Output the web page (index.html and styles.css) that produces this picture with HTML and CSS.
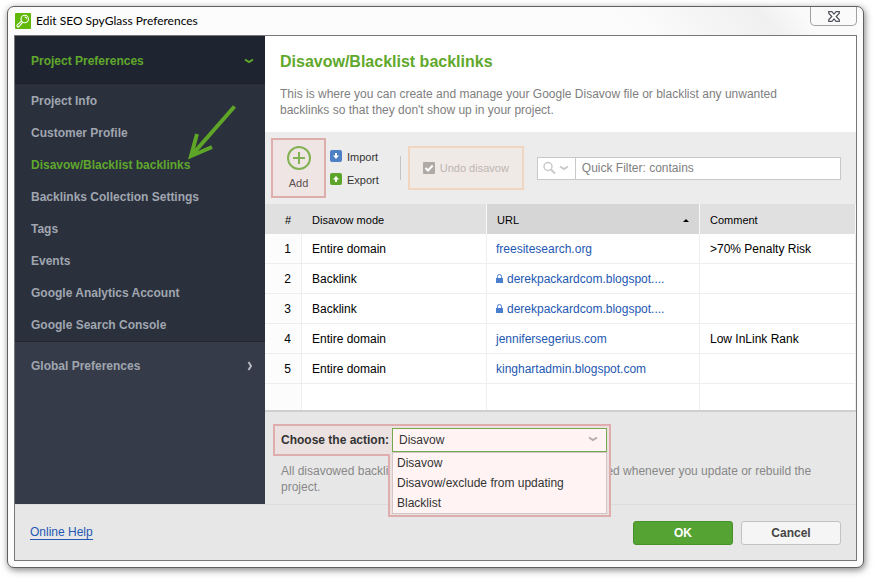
FILE: index.html
```html
<!DOCTYPE html>
<html lang="en">
<head>
    <meta charset="UTF-8">
    <meta name="viewport" content="width=device-width, initial-scale=1.0">
    <title>Edit SEO SpyGlass Preferences</title>
    <link rel="stylesheet" href="styles.css">
</head>
<body>
    <div class="window">
        <header class="titlebar">
            <svg class="app-icon" width="16" height="16" viewBox="0 0 16 16">
                <rect width="16" height="16" rx="1" fill="#62b808"/>
                <g fill="none" stroke="#fff" stroke-width="1.1">
                    <circle cx="9.7" cy="6" r="3.7"/>
                    <path d="M6.4 8.2 2.3 11.9a1.1 1.1 0 0 0 1.6 1.6L7.6 9.3M9.6 4a2 2 0 0 1 2 1.8"/>
                </g>
            </svg>
            <span class="window-title">Edit SEO SpyGlass Preferences</span>
            <button class="close" aria-label="Close">
                <svg width="12" height="11" viewBox="0 0 12 11">
                    <path d="M.7.7h3.2L6 3.1 8.1.7h3.2v1.5L8.2 5.5l3.1 3.3v1.5H8.1L6 7.9 3.9 10.3H.7V8.8l3.1-3.3L.7 2.2z" fill="#fff" stroke="#50535c" stroke-width="1.2"/>
                </svg>
            </button>
        </header>

        <div class="client">
            <div class="content">
                <nav class="sidebar">
                    <a class="section open" href="#">Project Preferences
                        <svg width="10" height="6" viewBox="0 0 10 6"><path d="M1 1.5 5 4l4-2.5" fill="none" stroke="#5fa82c" stroke-width="2"/></svg>
                    </a>
                    <ul class="nav-list">
                        <li><a href="#">Project Info</a></li>
                        <li><a href="#">Customer Profile</a></li>
                        <li><a class="active" href="#">Disavow/Blacklist backlinks</a></li>
                        <li><a href="#">Backlinks Collection Settings</a></li>
                        <li><a href="#">Tags</a></li>
                        <li><a href="#">Events</a></li>
                        <li><a href="#">Google Analytics Account</a></li>
                        <li><a href="#">Google Search Console</a></li>
                    </ul>
                    <a class="section" href="#">Global Preferences
                        <svg class="right" width="6" height="10" viewBox="0 0 6 10"><path d="M1.5 1 4 5 1.5 9" fill="none" stroke="#b4b8be" stroke-width="2"/></svg>
                    </a>
                    <svg class="arrow" width="50" height="58" viewBox="0 0 50 58">
                        <path d="M47.5 2.5 4 52" fill="none" stroke="#5fa527" stroke-width="4"/>
                        <path d="M10 30 4 52l21-9" fill="none" stroke="#5fa527" stroke-width="4"/>
                    </svg>
                </nav>

                <main class="main">
                    <div class="intro">
                        <h1>Disavow/Blacklist backlinks</h1>
                        <p>This is where you can create and manage your Google Disavow file or blacklist any unwanted backlinks so that they don't show up in your project.</p>
                    </div>

                    <div class="toolbar">
                        <button class="add">
                            <svg width="24" height="24" viewBox="0 0 24 24" fill="none" stroke="#82b254" stroke-width="2">
                                <circle cx="12" cy="12" r="11"/><path d="M12 6v12M6 12h12"/>
                            </svg>
                            Add
                        </button>
                        <div class="transfer">
                            <button>
                                <svg width="12" height="12" viewBox="0 0 12 12"><rect width="12" height="12" rx="2" fill="#4f7fc4"/><path d="M5 3h2v2.5h2L6 9 3 5.5h2z" fill="#fff"/></svg>
                                Import
                            </button>
                            <button>
                                <svg width="12" height="12" viewBox="0 0 12 12"><rect width="12" height="12" rx="2" fill="#5ba52a"/><path d="M5 9h2V6.5h2L6 3 3 6.5h2z" fill="#fff"/></svg>
                                Export
                            </button>
                        </div>
                        <span class="divider"></span>
                        <button class="undo" disabled>
                            <svg width="12" height="12" viewBox="0 0 12 12"><rect width="12" height="12" rx="1" fill="#b0aaa7"/><path d="m2.5 6 2.5 2.5 4.7-5" fill="none" stroke="#fff" stroke-width="2"/></svg>
                            Undo disavow
                        </button>
                        <div class="filter">
                            <button class="filter-menu" aria-label="Filter options">
                                <svg width="26" height="14" viewBox="0 0 26 14" fill="none" stroke="#c9c9c9">
                                    <circle cx="5" cy="5.5" r="4" stroke-width="1.5"/><path d="m8 8.5 4 4" stroke-width="2"/><path d="m17 5.5 4 2.5 4-2.5" stroke-width="2"/>
                                </svg>
                            </button>
                            <input type="text" placeholder="Quick Filter: contains" aria-label="Quick Filter">
                        </div>
                    </div>

                    <div class="table-wrap">
                        <table>
                            <thead>
                                <tr>
                                    <th class="num">#</th>
                                    <th class="mode">Disavow mode</th>
                                    <th class="url sorted"><div>URL <svg width="6" height="3" viewBox="0 0 6 3"><path d="M0 3 3 0l3 3z"/></svg></div></th>
                                    <th>Comment</th>
                                </tr>
                            </thead>
                            <tbody>
                                <tr><td>1</td><td>Entire domain</td><td><a href="#">freesitesearch.org</a></td><td>&gt;70% Penalty Risk</td></tr>
                                <tr><td>2</td><td>Backlink</td><td><a href="#"><svg class="lock" width="7" height="9" viewBox="0 0 7 9"><path d="M1.5 4V2.5a2 2 0 0 1 4 0V4" fill="none" stroke="#4a7fd0"/><path d="M0 4h7v5H0z" fill="#4a7fd0"/></svg>derekpackardcom.blogspot....</a></td><td></td></tr>
                                <tr><td>3</td><td>Backlink</td><td><a href="#"><svg class="lock" width="7" height="9" viewBox="0 0 7 9"><path d="M1.5 4V2.5a2 2 0 0 1 4 0V4" fill="none" stroke="#4a7fd0"/><path d="M0 4h7v5H0z" fill="#4a7fd0"/></svg>derekpackardcom.blogspot....</a></td><td></td></tr>
                                <tr><td>4</td><td>Entire domain</td><td><a href="#">jennifersegerius.com</a></td><td>Low InLink Rank</td></tr>
                                <tr><td>5</td><td>Entire domain</td><td><a href="#">kinghartadmin.blogspot.com</a></td><td></td></tr>
                                <tr><td></td><td></td><td></td><td></td></tr>
                            </tbody>
                        </table>
                    </div>

                    <div class="action-panel">
                        <div class="action-row">
                            <svg class="callout" width="338" height="93" viewBox="0 0 338 93">
                                <path d="M1 1h336v91H116V31H1z" fill="#ebe1e0" stroke="#dfadad" stroke-width="2"/>
                            </svg>
                            <label for="action">Choose the action:</label>
                            <div class="dropdown">
                                <select id="action">
                                    <option>Disavow</option>
                                    <option>Disavow/exclude from updating</option>
                                    <option>Blacklist</option>
                                </select>
                                <svg class="caret" width="10" height="6" viewBox="0 0 10 6"><path d="M1 1.5 5 4l4-2.5" fill="none" stroke="#b5adad" stroke-width="2"/></svg>
                                <ul class="options">
                                    <li>Disavow</li>
                                    <li>Disavow/exclude from updating</li>
                                    <li>Blacklist</li>
                                </ul>
                            </div>
                        </div>
                        <p>All disavowed backli<span class="behind-menu"></span>ed whenever you update or rebuild the project.</p>
                    </div>
                </main>
            </div>

            <footer class="footer">
                <a class="help" href="#">Online Help</a>
                <button class="btn ok">OK</button>
                <button class="btn">Cancel</button>
            </footer>
        </div>
    </div>
</body>
</html>
```

FILE: styles.css
```css
* {
    box-sizing: border-box;
}
body {
    display: flex;
    height: 100vh;
    margin: 0;
    padding: 6px 11px 10px 7px;
    background: #fff;
    font-family: "Liberation Sans", Arial, sans-serif;
    font-size: 12px;
    line-height: 16px;
    color: #000;
}
button, input, select {
    margin: 0;
    padding: 0;
    border: 0;
    background: none;
    font: inherit;
    color: inherit;
}
h1, p, ul {
    margin: 0;
    padding: 0;
}
ul {
    list-style: none;
}
a {
    text-decoration: none;
}
svg {
    flex: none;
}

.window {
    flex: 1;
    display: flex;
    flex-direction: column;
    padding: 0 6px 6px 6px;
    border: 1px solid #606060;
    border-radius: 7px;
    background: #fcfcfc;
    box-shadow: 1px 2px 7px rgba(0, 0, 0, .5);
}
.titlebar {
    display: flex;
    align-items: center;
    gap: 5px;
    height: 28px;
    background: linear-gradient(50deg, transparent 72%, #f0f0f0 88%, #fafafa 93%);
}
.app-icon {
    margin-left: 1px;
}
.window-title {
    flex: 1;
    font-family: Lato, "Open Sans", sans-serif;
}
.close {
    display: flex;
    align-items: center;
    justify-content: center;
    align-self: flex-start;
    width: 47px;
    height: 19px;
    border: 1px solid #a0a0a0;
    border-top: 0;
    border-radius: 0 0 5px 5px;
    background: #fafafa;
}

.client {
    flex: 1;
    display: flex;
    flex-direction: column;
    border: 1px solid #777;
    background: #e7e7e7;
}
.content {
    flex: 1;
    display: flex;
}

/* sidebar */
.sidebar {
    position: relative;
    width: 250px;
    background: #353b48;
    font-weight: bold;
    color: #a0a6b0;
}
.sidebar a {
    color: inherit;
}
.section {
    display: flex;
    align-items: center;
    justify-content: space-between;
    height: 48px;
    padding: 0 11px 0 16px;
}
.section.open {
    padding-top: 2px;
    background: #1f2530;
    border-bottom: 1px solid #1b202a;
    color: #5fa82c;
}
.right {
    margin-right: 1px;
}
.nav-list {
    padding-top: 1px;
    background: #2a303c;
    border-bottom: 1px solid #222732;
}
.nav-list a {
    display: block;
    padding: 8px 16px;
}
.sidebar .active {
    color: #5fa82c;
}
.arrow {
    position: absolute;
    left: 172px;
    top: 68px;
}

/* main */
.main {
    flex: 1;
    min-width: 0;
    display: flex;
    flex-direction: column;
    background: #fff;
}
.intro {
    height: 96px;
    padding: 16px 60px 0 15px;
    color: #808080;
}
h1 {
    margin-bottom: 14px;
    font-size: 16px;
    line-height: 20px;
    color: #5fa82c;
}
.toolbar {
    display: flex;
    align-items: center;
    height: 72px;
    padding: 0 15px 0 6px;
    background: #ececec;
    color: #333;
}
.add {
    display: flex;
    flex-direction: column;
    align-items: center;
    gap: 5px;
    width: 55px;
    height: 60px;
    padding-top: 6px;
    border: 2px solid #e0adad;
    background: #efe5e4;
    font-size: 11px;
    color: #5c5252;
}
.transfer {
    display: flex;
    flex-direction: column;
    gap: 7px;
    margin-left: 4px;
    font-size: 11px;
}
.transfer button {
    display: flex;
    align-items: center;
    gap: 5px;
}
.transfer svg {
    margin-bottom: 2px;
}
.divider {
    width: 1px;
    height: 24px;
    margin: 0 7px 0 21px;
    background: #c4c4c4;
}
.undo {
    display: flex;
    align-items: center;
    justify-content: center;
    gap: 5px;
    width: 116px;
    height: 44px;
    border: 2px solid #f0d6c0;
    background: #f0eae6;
    font-size: 11px;
    color: #bcb6b2;
}
.filter {
    flex: 1;
    display: flex;
    height: 23px;
    margin-left: 13px;
    border: 1px solid #c8c8c8;
    background: #fff;
}
.filter-menu {
    display: flex;
    align-items: center;
    justify-content: center;
    width: 38px;
    border-right: 1px solid #c8c8c8;
}
.filter input {
    flex: 1;
    min-width: 0;
    padding: 0 6px;
}
.filter input::placeholder {
    color: #808080;
}

/* backlinks table */
.table-wrap {
    flex: 1 1 0;
    min-height: 0;
    overflow: hidden;
}
table {
    width: 100%;
    border-collapse: separate;
    border-spacing: 0;
    table-layout: fixed;
}
th, td {
    height: 30px;
    padding: 0 10px;
    text-align: left;
    border-right: 1px solid #eee;
}
th {
    padding-top: 2px;
    background: #e0e0e0;
    font-size: 11px;
    font-weight: normal;
    border-right-color: #f8f8f8;
}
td {
    border-bottom: 1px solid #eee;
    white-space: nowrap;
}
th:first-child, td:first-child {
    text-align: right;
}
th:first-child {
    border-right-color: #e0e0e0;
}
td:first-child {
    background: #fcfcfc;
}
.num {
    width: 37px;
    padding-left: 0;
}
.mode {
    width: 185px;
}
.url {
    width: 213px;
}
.sorted {
    background: #d6d6d6;
}
.sorted div {
    display: flex;
    align-items: center;
    justify-content: space-between;
}
td a {
    color: #2458b3;
}
td:nth-child(3) {
    padding-left: 9px;
}
.lock {
    margin-right: 4px;
}

/* action panel */
.action-panel {
    height: 94px;
    padding: 12px 40px 0 8px;
    border-top: 2px solid #cfcfcf;
    background: #e7e7e7;
    color: #888;
}
.action-row {
    position: relative;
    display: flex;
    align-items: center;
    height: 32px;
    padding-left: 8px;
    margin-bottom: 7px;
    color: #333;
}
.action-row label {
    position: relative;
    width: 111px;
    font-weight: bold;
    white-space: nowrap;
}
.action-panel p {
    padding-left: 8px;
}
.dropdown {
    position: relative;
}
.dropdown select {
    display: block;
    width: 215px;
    height: 24px;
    padding: 0 6px;
    border: 1px solid #76a850;
    background: #fff4f3;
    appearance: none;
}
.caret {
    position: absolute;
    top: 8px;
    right: 9px;
}
.options {
    position: absolute;
    top: 24px;
    left: 0;
    width: 215px;
    padding-left: 4px;
    border: 1px solid #d0c6c6;
    background: #fff4f3;
    line-height: 20px;
}
.callout {
    position: absolute;
    top: 0;
    left: 0;
}
/* part of the line covered by the open menu */
.behind-menu {
    display: inline-block;
    width: 218px;
}

.footer {
    display: flex;
    align-items: center;
    gap: 8px;
    height: 56px;
    padding: 0 15px;
    border-top: 1px solid #dcdcdc;
}
.help {
    margin-right: auto;
    color: #2458b3;
    border-bottom: 1px solid #2458b3;
    line-height: 14px;
}
.btn {
    width: 100px;
    height: 24px;
    border: 1px solid #c2c2c2;
    border-radius: 3px;
    background: #f5f5f5;
    font-weight: bold;
    color: #444;
}
.ok {
    border-color: #46912a;
    background: #55a333;
    color: #fff;
}
```
